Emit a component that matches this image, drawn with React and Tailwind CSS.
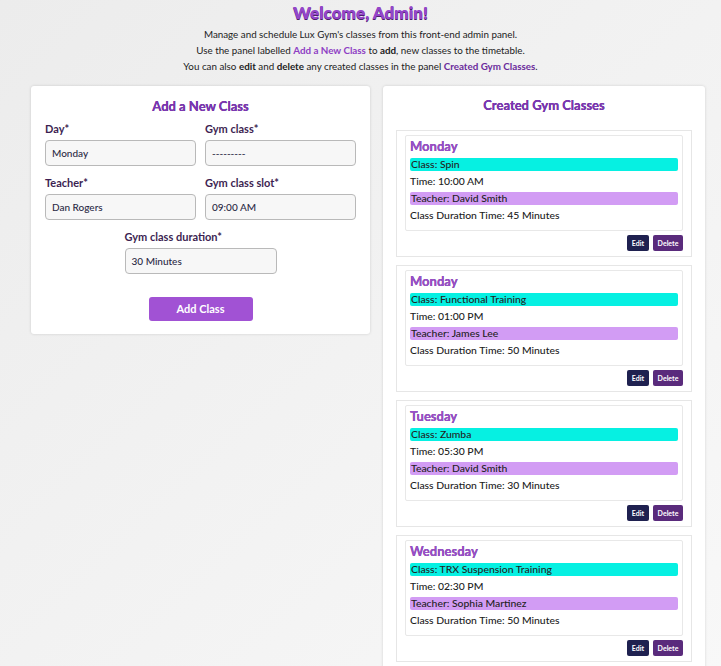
import React from "react";

const classes = [
  { day: "Monday", name: "Spin", time: "10:00 AM", teacher: "David Smith", duration: "45 Minutes" },
  { day: "Monday", name: "Functional Training", time: "01:00 PM", teacher: "James Lee", duration: "50 Minutes" },
  { day: "Tuesday", name: "Zumba", time: "05:30 PM", teacher: "David Smith", duration: "30 Minutes" },
  { day: "Wednesday", name: "TRX Suspension Training", time: "02:30 PM", teacher: "Sophia Martinez", duration: "50 Minutes" },
];

const Field = ({ label, value, className = "" }) => (
  <div className={className}>
    <label className="block text-[11px] font-bold text-[#3d1f52] leading-[14px] mb-[4px]">{label}</label>
    <div className="h-[26px] rounded-[4px] border border-[#b9b9b9] bg-[#f7f7f7] px-[6px] flex items-center text-[10px] font-medium text-[#2b2a45]">
      {value}
    </div>
  </div>
);

const ClassCard = ({ item }) => (
  <div className="border border-[#e6e6e6] px-[8px] pt-[4px] pb-[5px]">
    <div className="border border-[#e8e8e8] rounded-[2px] px-[4px] pt-[2px] pb-[8px] text-[10.4px] font-medium text-[#222]">
      <h3 className="text-[13px] font-bold leading-[17px] text-[#9a4fc9] [text-shadow:0_0_0.5px_#5b2b80]">{item.day}</h3>
      <p className="mt-[3px] h-[13px] leading-[13px] bg-[#06f0e2] rounded-[2px] px-[1px]">Class: {item.name}</p>
      <p className="mt-[3px] leading-[14px]">Time: {item.time}</p>
      <p className="mt-[4px] h-[13px] leading-[13px] bg-[#d29cf4] rounded-[2px] px-[1px]">Teacher: {item.teacher}</p>
      <p className="mt-[3px] leading-[14px]">Class Duration Time: {item.duration}</p>
    </div>
    <div className="flex justify-end gap-[4px] mt-[4px]">
      <button className="h-[16px] w-[22px] rounded-[2px] bg-[#1f2150] text-white text-[7px] leading-[16px] font-bold">Edit</button>
      <button className="h-[16px] w-[30px] rounded-[2px] bg-[#5a2b7c] text-white text-[7px] leading-[16px] font-bold">Delete</button>
    </div>
  </div>
);

export default function App() {
  return (
    <div
      className="min-h-[666px] bg-gradient-to-br from-[#ececec] to-[#f8f8f8] text-[#222]"
      style={{ fontFamily: "Lato, 'Open Sans', sans-serif" }}
    >
      <header className="text-center pt-[3px]">
        <h1 className="text-[17px] font-extrabold leading-[20px] text-[#9446c9] [text-shadow:0_1px_0_#4a1f6b]">Welcome, Admin!</h1>
        <div className="mt-[3px] text-[9.8px] leading-[16px] text-[#222]">
          <p>Manage and schedule Lux Gym's classes from this front-end admin panel.</p>
          <p>
            Use the panel labelled <span className="font-bold text-[#8e3fc4]">Add a New Class</span> to <span className="font-bold">add</span>, new classes to the timetable.
          </p>
          <p>
            You can also <span className="font-bold">edit</span> and <span className="font-bold">delete</span> any created classes in the panel <span className="font-bold text-[#6b2c9c]">Created Gym Classes</span>.
          </p>
        </div>
      </header>

      <main className="flex items-start gap-[13px] pl-[31px] mt-[12px]">
        <section className="w-[339px] bg-white rounded-[3px] shadow-[0_0_3px_rgba(0,0,0,0.15)] px-[14px] pt-[12px] pb-[13px]">
          <h2 className="text-center text-[13px] font-bold leading-[16px] text-[#7c35b5] [text-shadow:0_0_0.5px_#4a1f6b]">Add a New Class</h2>
          <div className="grid grid-cols-2 gap-x-[9px] gap-y-[10px] mt-[8px]">
            <Field label="Day*" value="Monday" />
            <Field label="Gym class*" value="---------" />
            <Field label="Teacher*" value="Dan Rogers" />
            <Field label="Gym class slot*" value="09:00 AM" />
          </div>
          <div className="flex justify-center mt-[10px]">
            <Field label="Gym class duration*" value="30 Minutes" className="w-[152px]" />
          </div>
          <div className="flex justify-center mt-[23px]">
            <button className="h-[24px] w-[104px] rounded-[3px] bg-[#a152d4] text-white text-[11px] font-bold">Add Class</button>
          </div>
        </section>

        <section className="w-[322px] bg-white rounded-[3px] shadow-[0_0_3px_rgba(0,0,0,0.15)] px-[13px] pt-[11px] pb-[10px]">
          <h2 className="text-center text-[13px] font-bold leading-[16px] text-[#7c35b5] [text-shadow:0_0_0.5px_#4a1f6b]">Created Gym Classes</h2>
          <div className="mt-[17px] flex flex-col gap-[8px]">
            {classes.map((c, i) => (
              <ClassCard key={i} item={c} />
            ))}
          </div>
        </section>
      </main>
    </div>
  );
}
